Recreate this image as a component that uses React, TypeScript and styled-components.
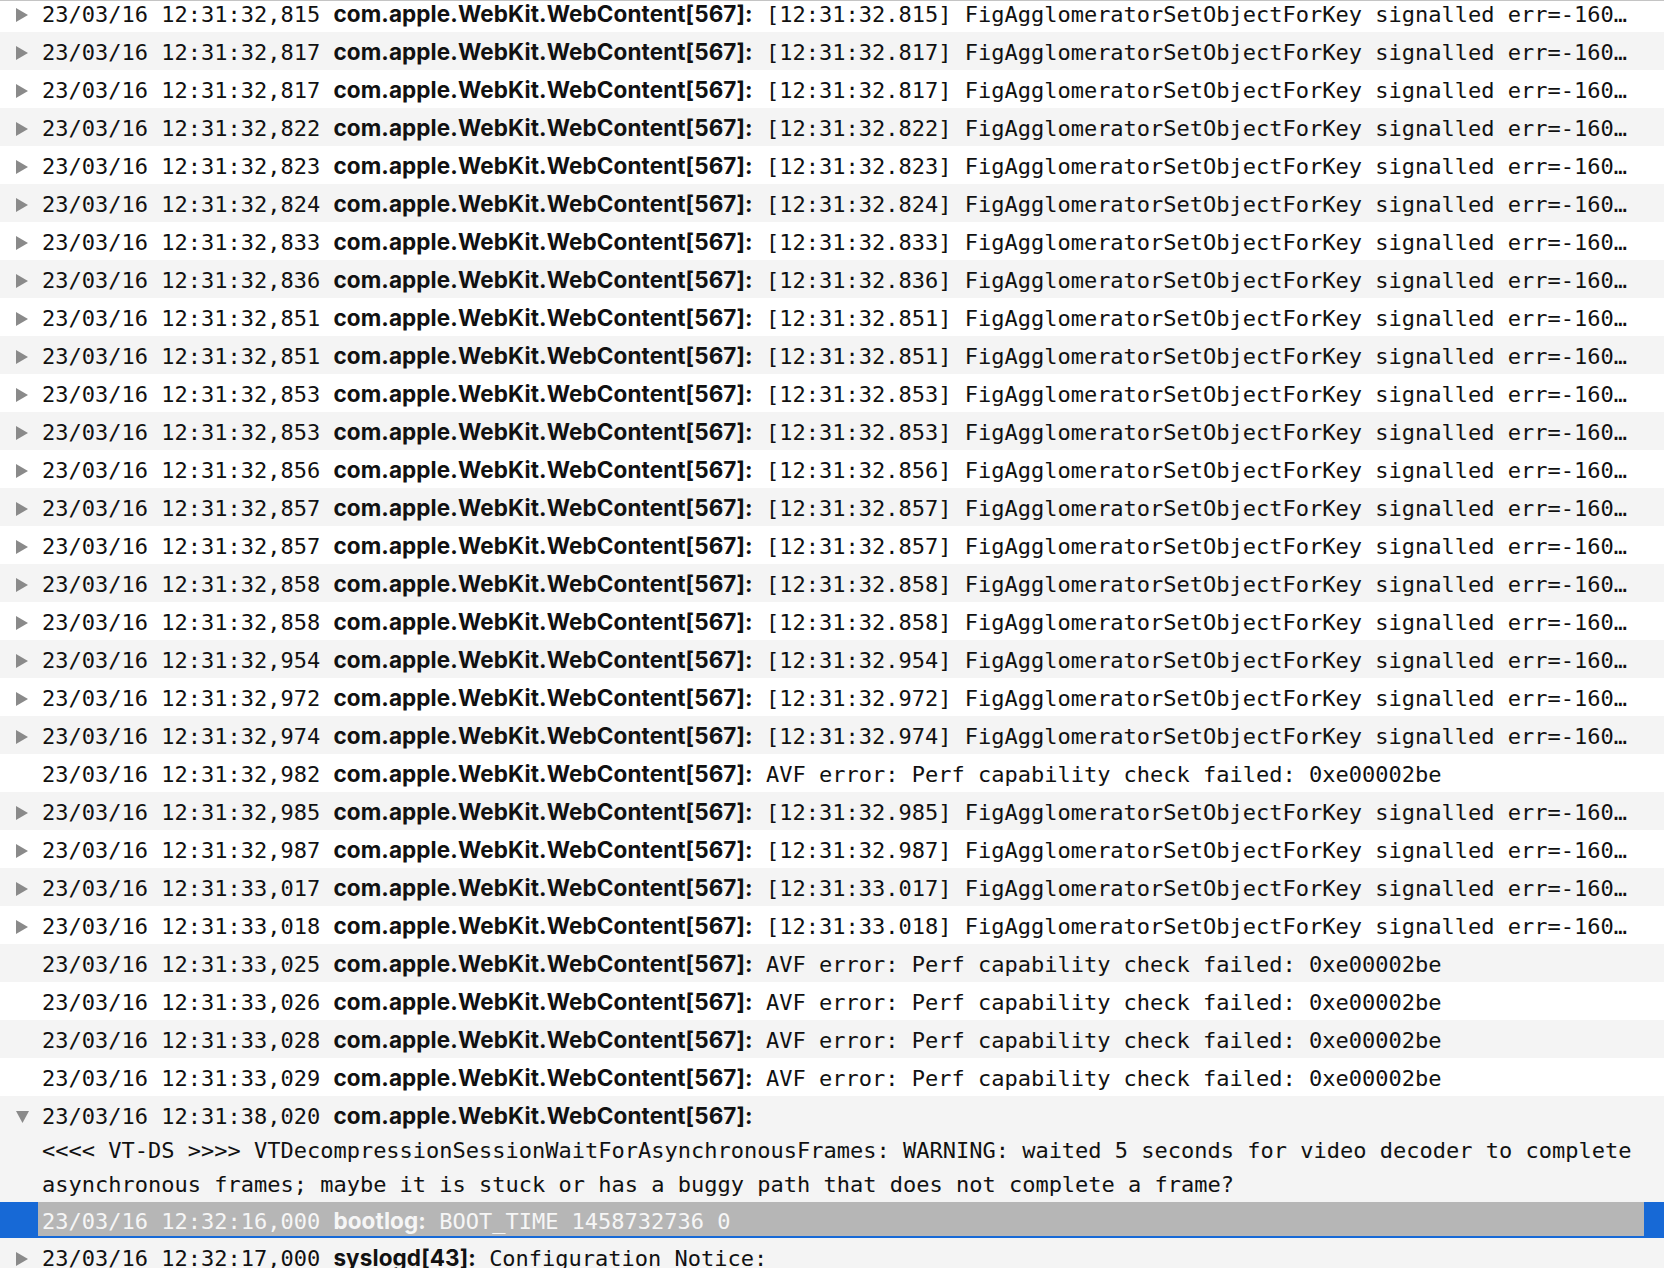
import styled, { createGlobalStyle } from 'styled-components'

const GlobalStyle = createGlobalStyle`
    html, body {
        margin: 0;
        padding: 0;
        background: #ffffff;
    }
`

const LogView = styled.div`
    height: 1268px;
    overflow: hidden;
    border-top: 1px solid #c4c4c4;
    box-sizing: border-box;
    font-family: "DejaVu Sans Mono", "Liberation Mono", monospace;
    font-size: 22px;
    color: #111111;
`

const LogList = styled.div`
    margin-top: -7px;
`

const Row = styled.div<{ $striped: boolean, $selected?: boolean }>`
    display: flex;
    align-items: flex-start;
    background: ${(p) => (p.$selected ? '#1769d6' : p.$striped ? '#f4f4f4' : '#ffffff')};
    padding: ${(p) => (p.$selected ? '0 20px 2px 0' : '4px 28px 0 0')};
`

const Toggle = styled.div<{ $narrow?: boolean }>`
    flex: 0 0 ${(p) => (p.$narrow ? '38px' : '42px')};
    height: 34px;
    display: flex;
    align-items: center;
    padding-left: 16px;
    box-sizing: border-box;
`

const Body = styled.div<{ $selected?: boolean }>`
    flex: 1;
    min-width: 0;
    line-height: 34px;
    box-sizing: border-box;
    ${(p) => (p.$selected
        ? `
        height: 34px;
        overflow: hidden;
        padding: 3px 0 0 4px;
        background: #b6b6b6;
        color: #f6f6f6;
    `
        : `
        color: #111111;
    `)}
`

const Line = styled.div`
    height: 34px;
    white-space: nowrap;
    overflow: hidden;
    text-overflow: ellipsis;
`

const Wrapped = styled.div`
    white-space: normal;
`

const Sender = styled.span`
    font-family: Inter, "Liberation Sans", sans-serif;
    font-weight: 700;
    font-size: 22.5px;
    line-height: 1;
    letter-spacing: 0.1px;
`

const Triangle = ({ open }: { open: boolean }): JSX.Element => (
    open
        ? (
            <svg width="13" height="12" viewBox="0 0 13 12">
                <polygon points="0,0 13,0 6.5,12" fill="#8a8a8a" />
            </svg>
        )
        : (
            <svg width="12" height="14" viewBox="0 0 12 14">
                <polygon points="0,0 12,7 0,14" fill="#8a8a8a" />
            </svg>
        )
)

interface LogEntry {
    time: string
    sender: string
    message: string
    more?: boolean
    open?: boolean
    selected?: boolean
}

const fig = (ms: string): string =>
    `[12:31:${ms}] FigAgglomeratorSetObjectForKey signalled err=-16020 (kFigStringConformerError_ParamErr) (NULL key) at /Library/Caches/com.apple.xbs/Sources/CoreMedia/FigAgglomerator.c line 92`

const web = 'com.apple.WebKit.WebContent[567]:'
const avf = 'AVF error: Perf capability check failed: 0xe00002be'

const figTimes = ['32,815', '32,817', '32,817', '32,822', '32,823', '32,824', '32,833', '32,836', '32,851', '32,851',
    '32,853', '32,853', '32,856', '32,857', '32,857', '32,858', '32,858', '32,954', '32,972', '32,974']

const entries: LogEntry[] = [
    ...figTimes.map((t) => ({ time: `23/03/16 12:31:${t}`, sender: web, message: fig(t.replace(',', '.')), more: true })),
    { time: '23/03/16 12:31:32,982', sender: web, message: avf },
    ...['32,985', '32,987', '33,017', '33,018'].map((t) => ({
        time: `23/03/16 12:31:${t}`, sender: web, message: fig(t.replace(',', '.')), more: true
    })),
    { time: '23/03/16 12:31:33,025', sender: web, message: avf },
    { time: '23/03/16 12:31:33,026', sender: web, message: avf },
    { time: '23/03/16 12:31:33,028', sender: web, message: avf },
    { time: '23/03/16 12:31:33,029', sender: web, message: avf },
    {
        time: '23/03/16 12:31:38,020',
        sender: web,
        message: '<<<< VT-DS >>>> VTDecompressionSessionWaitForAsynchronousFrames: WARNING: waited 5 seconds for video decoder to complete asynchronous frames; maybe it is stuck or has a buggy path that does not complete a frame?',
        more: true,
        open: true
    },
    { time: '23/03/16 12:32:16,000', sender: 'bootlog:', message: 'BOOT_TIME 1458732736 0', selected: true },
    { time: '23/03/16 12:32:17,000', sender: 'syslogd[43]:', message: 'Configuration Notice:', more: true }
]

const App = (): JSX.Element => {
    return (
        <>
            <GlobalStyle />
            <LogView>
                <LogList>
                    {entries.map((entry, index) => (
                        <Row key={index} $striped={index % 2 === 1} $selected={entry.selected}>
                            <Toggle $narrow={entry.selected}>
                                {entry.more === true && <Triangle open={entry.open === true} />}
                            </Toggle>
                            <Body $selected={entry.selected}>
                                {entry.open === true
                                    ? (
                                        <>
                                            <Line>{entry.time} <Sender>{entry.sender}</Sender></Line>
                                            <Wrapped>{entry.message}</Wrapped>
                                        </>
                                    )
                                    : (
                                        <Line>
                                            {entry.time} <Sender>{entry.sender}</Sender> {entry.message}
                                        </Line>
                                    )}
                            </Body>
                        </Row>
                    ))}
                </LogList>
            </LogView>
        </>
    )
}

export default App
